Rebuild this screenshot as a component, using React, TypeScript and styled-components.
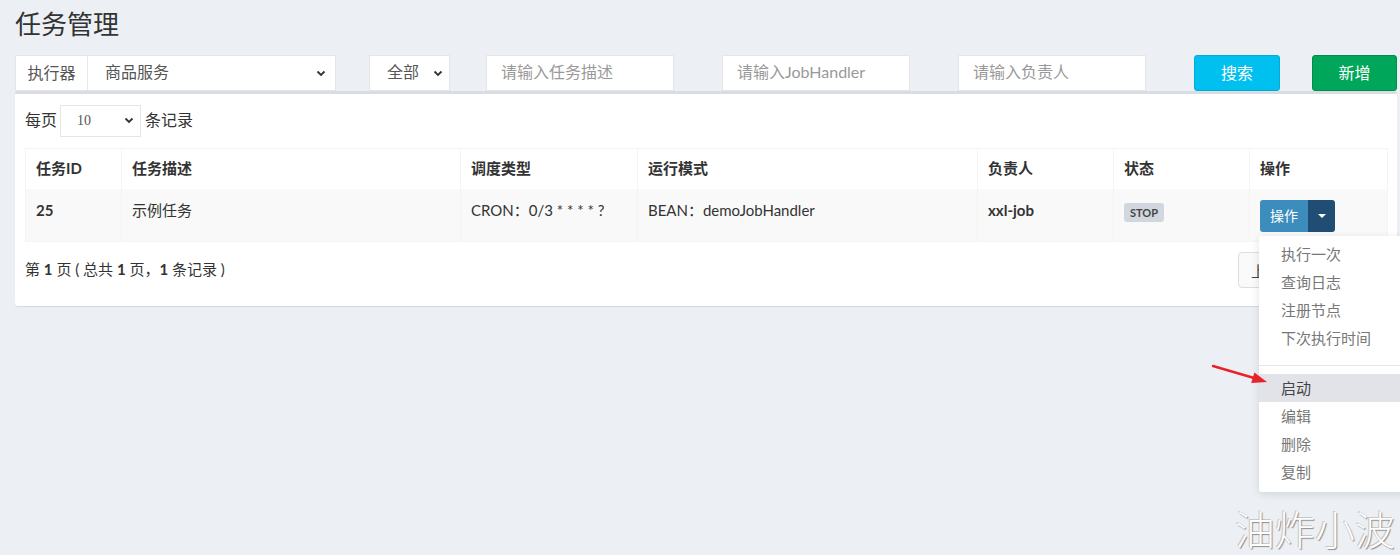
import React from 'react';
import styled, { createGlobalStyle } from 'styled-components';

const GlobalStyle = createGlobalStyle`
  html, body { margin: 0; padding: 0; background: #ecf0f5; overflow: hidden; }
  body { font-family: Lato, "Noto Sans CJK SC", sans-serif; color: #333; font-size: 15px; }
  * { box-sizing: border-box; }
`;

const Page = styled.div`
  position: relative;
  width: 1400px;
  height: 555px;
`;

const Title = styled.h1`
  margin: 0;
  padding: 8px 15px 0;
  height: 40px;
  font-size: 26px;
  line-height: 32px;
  font-weight: 400;
  color: #333;
`;

const FilterRow = styled.div`
  display: flex;
  height: 36px;
  margin-top: 15px;
  padding-left: 15px;
`;

const Slot = styled.div<{ $w: number; $ml?: number }>`
  flex: 0 0 ${p => p.$w}px;
  width: ${p => p.$w}px;
  min-width: 0;
  margin-left: ${p => p.$ml ?? 0}px;
  display: flex;
`;

const InputGroup = styled.div`
  flex: 1;
  display: flex;
  background: #fff;
  border: 1px solid #e2e5ea;
`;

const Addon = styled.div`
  flex: 0 0 72px;
  display: flex;
  align-items: center;
  justify-content: center;
  padding-bottom: 3px;
  border-right: 1px solid #e6e8ec;
  color: #555;
  font-size: 16px;
`;

const SelectBox = styled.div<{ $pl: number; $pr: number; $border?: boolean; $serif?: boolean }>`
  flex: 1;
  display: flex;
  align-items: center;
  justify-content: space-between;
  padding: 0 ${p => p.$pr}px 0 ${p => p.$pl}px;
  background: #fff;
  color: #555;
  font-size: ${p => (p.$serif ? 14 : 16)}px;
  font-family: ${p => (p.$serif ? '"Liberation Serif", serif' : 'inherit')};
  border: ${p => (p.$border ? '1px solid #e2e5ea' : 'none')};
`;

const SelectText = styled.span<{ $lift?: boolean }>`
  padding-bottom: ${p => (p.$lift ? 4 : 0)}px;
`;

const TextInput = styled.input`
  width: 100%;
  min-width: 0;
  height: 100%;
  border: 1px solid #e2e5ea;
  background: #fff;
  padding: 0 14px 3px;
  font-family: inherit;
  font-size: 16px;
  color: #555;
  outline: none;
  &::placeholder { color: #999; }
`;

const ActionButton = styled.button<{ $bg: string; $bd: string }>`
  width: 100%;
  border: 1px solid ${p => p.$bd};
  background: ${p => p.$bg};
  color: #fff;
  border-radius: 3px;
  font-family: inherit;
  font-size: 16px;
  padding: 0 0 3px;
`;

const Box = styled.div`
  margin-left: 15px;
  width: 1382px;
  background: #fff;
  border-top: 3px solid #d9dde3;
  border-radius: 3px;
  box-shadow: 0 1px 1px rgba(0, 0, 0, 0.1);
  padding: 10px 10px 18px;
`;

const LengthRow = styled.div`
  display: flex;
  align-items: center;
  height: 33px;
  gap: 3px;
  font-size: 16px;
  color: #333;
`;

const LengthText = styled.span`
  padding-bottom: 4px;
`;

const LengthSelect = styled.div`
  display: flex;
  width: 81px;
  height: 32px;
  margin-right: 1px;
`;

const Table = styled.table`
  width: 100%;
  margin-top: 11px;
  border-collapse: collapse;
  table-layout: fixed;
  border: 1px solid #f4f4f4;
`;

const Col = styled.col<{ $w: number }>`
  width: ${p => p.$w}px;
`;

const Th = styled.th`
  text-align: left;
  font-weight: 700;
  font-size: 15px;
  line-height: 22px;
  padding: 8px 10px 10px;
  border: 1px solid #f4f4f4;
  border-bottom-width: 0;
  color: #333;
`;

const Tr = styled.tr`
  background: #f9f9f9;
`;

const Td = styled.td<{ $bold?: boolean }>`
  vertical-align: top;
  font-size: 15px;
  line-height: 22px;
  padding: 10px 10px 9px;
  font-weight: ${p => (p.$bold ? 700 : 400)};
  border-left: 1px solid #f4f4f4;
  color: #333;
  position: relative;
`;

const Label = styled.span`
  display: inline-block;
  margin-top: 4px;
  background: #d2d6de;
  color: #444;
  font-size: 11px;
  font-weight: 700;
  line-height: 13px;
  padding: 3px 6px;
  border-radius: 3px;
  vertical-align: top;
`;

const BtnGroup = styled.div`
  position: relative;
  display: inline-flex;
  height: 32px;
  margin-top: 1px;
  vertical-align: top;
`;

const BtnMain = styled.span`
  display: flex;
  align-items: center;
  padding: 0 10px 1px;
  background: #3c8dbc;
  color: #fff;
  font-size: 14px;
  border-radius: 3px 0 0 3px;
  font-weight: 400;
`;

const BtnCaret = styled.span`
  display: flex;
  align-items: center;
  justify-content: center;
  width: 27px;
  background: #204d74;
  border-radius: 0 3px 3px 0;
  &::after {
    content: '';
    border-left: 4px solid transparent;
    border-right: 4px solid transparent;
    border-top: 4px solid #fff;
  }
`;

const Menu = styled.ul`
  position: absolute;
  top: calc(100% + 4px);
  left: -1px;
  z-index: 10;
  width: 160px;
  margin: 0;
  padding: 4px 0 6px;
  list-style: none;
  background: #fff;
  border-radius: 3px;
  box-shadow: 0 2px 8px rgba(0, 0, 0, 0.12);
`;

const MenuItem = styled.li<{ $active?: boolean }>`
  padding: 0 22px;
  line-height: 28px;
  font-size: 15px;
  font-weight: 400;
  white-space: nowrap;
  color: ${p => (p.$active ? '#444' : '#777')};
  background: ${p => (p.$active ? '#e1e3e9' : 'transparent')};
`;

const Divider = styled.li`
  height: 1px;
  margin: 13px 0 8px;
  background: #e6e6e6;
`;

const Footer = styled.div`
  display: flex;
  justify-content: space-between;
  align-items: center;
  margin-top: 10px;
  height: 36px;
  font-size: 15px;
  color: #333;
`;

const FooterText = styled.span`
  padding-bottom: 3px;
`;

const Pager = styled.ul`
  display: flex;
  margin: 0;
  padding: 0;
  list-style: none;
  height: 36px;
`;

const PageItem = styled.li<{ $w: number }>`
  width: ${p => p.$w}px;
  display: flex;
  align-items: center;
  justify-content: center;
  border: 1px solid #ddd;
  margin-left: -1px;
  background: #fafafa;
  color: #444;
  font-size: 15px;
  &:first-child { border-radius: 4px 0 0 4px; }
  &:last-child { border-radius: 0 4px 4px 0; }
`;

const Arrow = styled.svg`
  position: absolute;
  left: 1205px;
  top: 355px;
  z-index: 20;
`;

const Watermark = styled.div`
  position: absolute;
  right: 5px;
  bottom: 4px;
  font-size: 40px;
  line-height: 42px;
  font-weight: 300;
  color: #fdfdfd;
  text-shadow: 1px 1px 1px #8d8d8d, -1px -1px 0 #c8c8c8;
`;

const Chevron = () => (
  <svg width="10" height="7" viewBox="0 0 10 7">
    <polyline points="1.5,1.5 5,5 8.5,1.5" fill="none" stroke="#333" strokeWidth="1.8" />
  </svg>
);

const columns: { title: string; w: number }[] = [
  { title: '任务ID', w: 96 },
  { title: '任务描述', w: 339 },
  { title: '调度类型', w: 177 },
  { title: '运行模式', w: 340 },
  { title: '负责人', w: 136 },
  { title: '状态', w: 136 },
  { title: '操作', w: 138 },
];

const menuTop = ['执行一次', '查询日志', '注册节点', '下次执行时间'];
const menuBottom = ['启动', '编辑', '删除', '复制'];

export default function App() {
  return (
    <Page>
      <GlobalStyle />
      <Title>任务管理</Title>
      <FilterRow>
        <Slot $w={321}>
          <InputGroup>
            <Addon>执行器</Addon>
            <SelectBox $pl={17} $pr={9}>
              <SelectText $lift>商品服务</SelectText>
              <Chevron />
            </SelectBox>
          </InputGroup>
        </Slot>
        <Slot $w={81} $ml={33}>
          <SelectBox $pl={17} $pr={6} $border>
            <SelectText $lift>全部</SelectText>
            <Chevron />
          </SelectBox>
        </Slot>
        <Slot $w={188} $ml={36}>
          <TextInput placeholder="请输入任务描述" />
        </Slot>
        <Slot $w={188} $ml={48}>
          <TextInput placeholder="请输入JobHandler" />
        </Slot>
        <Slot $w={188} $ml={48}>
          <TextInput placeholder="请输入负责人" />
        </Slot>
        <Slot $w={86} $ml={48}>
          <ActionButton $bg="#00c0ef" $bd="#00acd6">搜索</ActionButton>
        </Slot>
        <Slot $w={85} $ml={32}>
          <ActionButton $bg="#00a65a" $bd="#008d4c">新增</ActionButton>
        </Slot>
      </FilterRow>

      <Box>
        <LengthRow>
          <LengthText>每页</LengthText>
          <LengthSelect>
            <SelectBox $pl={16} $pr={6} $border $serif>
              <SelectText>10</SelectText>
              <Chevron />
            </SelectBox>
          </LengthSelect>
          <LengthText>条记录</LengthText>
        </LengthRow>

        <Table>
          <colgroup>
            {columns.map(c => (
              <Col key={c.title} $w={c.w} />
            ))}
          </colgroup>
          <thead>
            <tr>
              {columns.map(c => (
                <Th key={c.title}>{c.title}</Th>
              ))}
            </tr>
          </thead>
          <tbody>
            <Tr>
              <Td $bold>25</Td>
              <Td>示例任务</Td>
              <Td>CRON：0/3 * * * * ?</Td>
              <Td>BEAN：demoJobHandler</Td>
              <Td $bold>xxl-job</Td>
              <Td>
                <Label>STOP</Label>
              </Td>
              <Td>
                <BtnGroup>
                  <BtnMain>操作</BtnMain>
                  <BtnCaret />
                  <Menu>
                    {menuTop.map(m => (
                      <MenuItem key={m}>{m}</MenuItem>
                    ))}
                    <Divider />
                    {menuBottom.map((m, i) => (
                      <MenuItem key={m} $active={i === 0}>
                        {m}
                      </MenuItem>
                    ))}
                  </Menu>
                </BtnGroup>
              </Td>
            </Tr>
          </tbody>
        </Table>

        <Footer>
          <FooterText>
            第 <b>1</b> 页 ( 总共 <b>1</b> 页，<b>1</b> 条记录 )
          </FooterText>
          <Pager>
            <PageItem $w={56}>上页</PageItem>
            <PageItem $w={38}>1</PageItem>
            <PageItem $w={57}>下页</PageItem>
          </Pager>
        </Footer>
      </Box>

      <Arrow width="70" height="35" viewBox="0 0 70 35">
        <line x1="8" y1="11" x2="49" y2="23" stroke="#e8222a" strokeWidth="2.4" strokeLinecap="round" />
        <polygon points="62,27 46.2,28 49.4,17.4" fill="#e8222a" />
      </Arrow>

      <Watermark>油炸小波</Watermark>
    </Page>
  );
}
